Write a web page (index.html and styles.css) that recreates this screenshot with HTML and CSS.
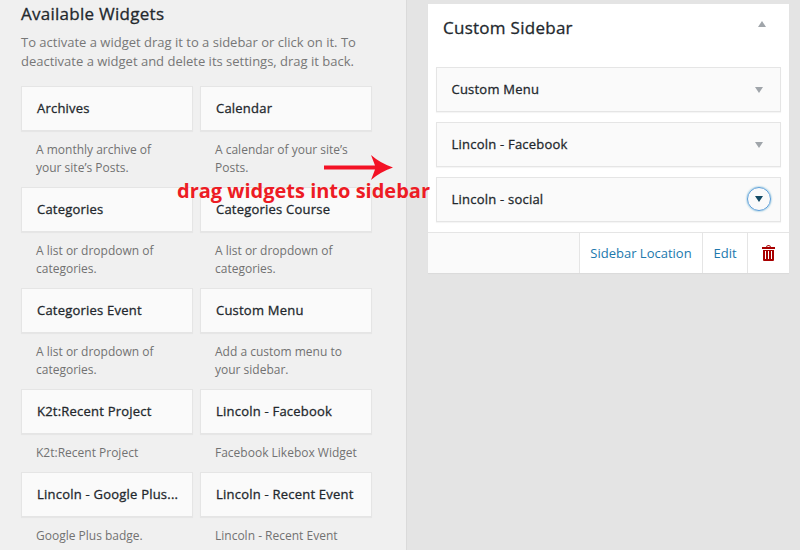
FILE: index.html
```
<!DOCTYPE html>
<html lang="en">
<head>
<meta charset="utf-8">
<title>Widgets</title>
<link rel="stylesheet" href="styles.css">
</head>
<body>
<main class="page">
  <section class="available">
    <h2 class="title">Available Widgets</h2>
    <p class="intro">To activate a widget drag it to a sidebar or click on it. To<br>deactivate a widget and delete its settings, drag it back.</p>
    <div class="grid">
      <div><h3 class="card">Archives</h3><p class="desc">A monthly archive of<br>your site’s Posts.</p></div>
      <div><h3 class="card">Calendar</h3><p class="desc">A calendar of your site’s<br>Posts.</p></div>
      <div><h3 class="card">Categories</h3><p class="desc">A list or dropdown of<br>categories.</p></div>
      <div><h3 class="card">Categories Course</h3><p class="desc">A list or dropdown of<br>categories.</p></div>
      <div><h3 class="card">Categories Event</h3><p class="desc">A list or dropdown of<br>categories.</p></div>
      <div><h3 class="card">Custom Menu</h3><p class="desc">Add a custom menu to<br>your sidebar.</p></div>
      <div><h3 class="card">K2t:Recent Project</h3><p class="desc">K2t:Recent Project</p></div>
      <div><h3 class="card">Lincoln - Facebook</h3><p class="desc">Facebook Likebox Widget</p></div>
      <div><h3 class="card">Lincoln - Google Plus...</h3><p class="desc">Google Plus badge.</p></div>
      <div><h3 class="card">Lincoln - Recent Event</h3><p class="desc">Lincoln - Recent Event</p></div>
    </div>
  </section>
  <section class="panel">
    <header class="head">
      <h2 class="name">Custom Sidebar</h2>
      <svg class="up" width="8" height="6" viewBox="0 0 8 6"><path d="M0 6L4 0L8 6Z"/></svg>
    </header>
    <div class="list">
      <h3 class="card">Custom Menu<svg class="down" width="8" height="6" viewBox="0 0 8 6"><path d="M0 0H8L4 6Z"/></svg></h3>
      <h3 class="card">Lincoln - Facebook<svg class="down" width="8" height="6" viewBox="0 0 8 6"><path d="M0 0H8L4 6Z"/></svg></h3>
      <h3 class="card">Lincoln - social<span class="ring"><svg width="8" height="6" viewBox="0 0 8 6"><path d="M0 0H8L4 6Z"/></svg></span></h3>
    </div>
    <footer class="foot">
      <a class="location">Sidebar Location</a>
      <a class="edit">Edit</a>
      <a class="trash"><svg width="13" height="16" viewBox="0 0 13 16"><path fill-rule="evenodd" d="M0 2H4Q4.500 0 6.500 0T9 2H13V4H0ZM5 2H8Q7.700 1 6.500 1T5 2ZM1 5H12V15Q12 16 11 16H2Q1 16 1 15ZM3 6V14H4V6ZM6 6V14H7V6ZM9 6V14H10V6Z"/></svg></a>
    </footer>
  </section>
  <div class="note">drag widgets into sidebar</div>
  <svg class="arrow" width="69" height="26" viewBox="0 0 69 26"><path d="M0 10.500H51L47 0Q56 8 69 12.500Q56 17 47 25L51 14.500H0Z"/></svg>
</main>
</body>
</html>
```
FILE: styles.css
```
* { box-sizing: border-box; }
body { margin: 0; font-family: "Open Sans", sans-serif; background: #e4e4e4; }
h2, h3, p { margin: 0; }
svg { display: block; flex: none; }
.page { position: relative; display: flex; align-items: flex-start; width: 800px; height: 550px; overflow: hidden; }
.available { width: 407px; height: 550px; padding: 2px 0 0 21px; background: #f0f0f0; border-right: 1px solid #dadada; overflow: hidden; }
.title, .name { font-size: 17px; line-height: 24px; font-weight: 500; letter-spacing: 0.27px; -webkit-text-stroke: 0.3px #23282d; color: #23282d; white-space: nowrap; }
.intro { margin-top: 7px; height: 53px; font-size: 13px; line-height: 19px; color: #777; white-space: nowrap; }
.grid { display: grid; grid-template-columns: 172px 172px; column-gap: 7px; }
.card { display: flex; align-items: center; justify-content: space-between; height: 45px; padding: 0 15px 2px; border: 1px solid #e5e5e5; background: #fafafa; box-shadow: 0 1px 1px rgba(0,0,0,.04); font-size: 13px; line-height: 18px; font-weight: 500; letter-spacing: 0.22px; -webkit-text-stroke: 0.3px #23282d; color: #23282d; white-space: nowrap; }
.desc { padding: 10px 0 10px 15px; font-size: 12px; line-height: 18px; color: #727272; white-space: nowrap; }
.panel { width: 361px; height: 269px; margin: 4px 0 0 21px; background: #fff; box-shadow: 0 1px 1px rgba(0,0,0,.04); }
.head { display: flex; justify-content: space-between; height: 63px; padding: 12px 23px 0 15px; }
.up { margin-top: 5px; fill: #a0a5aa; }
.list { display: grid; gap: 10px; padding: 0 8px; }
.list .card { padding-left: 14.5px; padding-right: 17px; }
.down { margin-top: 2px; fill: #a0a5aa; }
.ring { display: flex; align-items: center; justify-content: center; width: 24px; height: 24px; margin-right: -8px; border: 1px solid #5b9dd9; border-radius: 50%; box-shadow: 0 0 2px rgba(30,140,190,.8); fill: #124964; }
.foot { display: flex; justify-content: flex-end; height: 41px; margin-top: 10px; border-top: 1px solid #e5e5e5; background: #fafafa; font-size: 13px; line-height: 40px; color: #2178ad; }
.foot a { display: flex; justify-content: center; align-items: center; border-left: 1px solid #e5e5e5; background: #fff; white-space: nowrap; }
.location { width: 123px; }
.edit { width: 45px; }
.trash { width: 42px; fill: #a80000; }
.note { position: absolute; left: 177px; top: 177px; font-size: 20px; line-height: 27px; font-weight: 700; color: #ed1c24; white-space: nowrap; }
.arrow { position: absolute; left: 324px; top: 155px; fill: #f31225; }
```
